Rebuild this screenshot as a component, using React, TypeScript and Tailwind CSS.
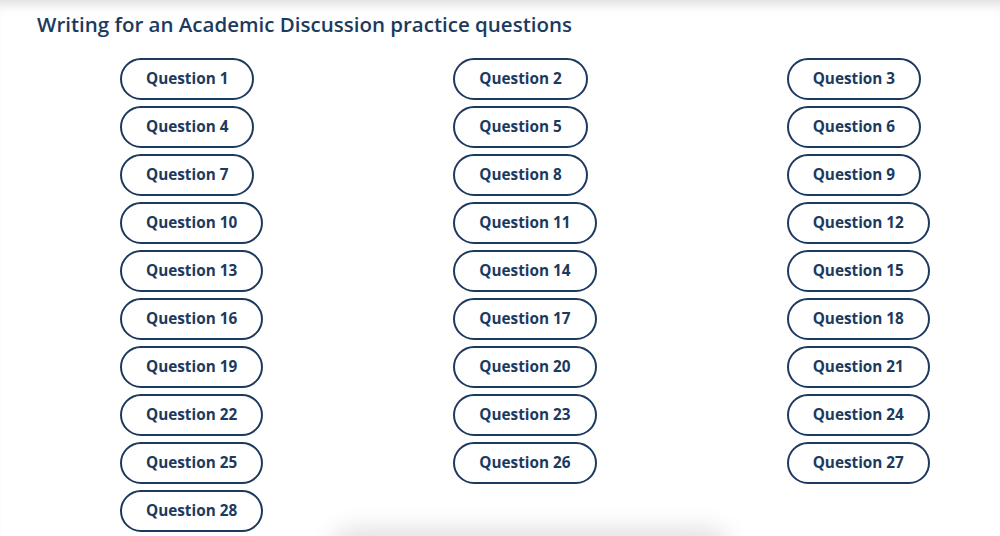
import React from "react"

const questions = Array.from({ length: 28 }, (_, i) => i + 1)

export default function App() {
    return (
        <div
            className="min-h-screen bg-white shadow-[inset_0_12px_12px_-8px_rgba(0,0,0,0.14)] text-[#1c3a5e]"
            style={{ fontFamily: "'Open Sans', sans-serif" }}
        >
            <h1 className="pl-[37px] pt-[10px] text-[20.5px] leading-[28px] font-semibold">
                Writing for an Academic Discussion practice questions
            </h1>
            <div className="mt-[20px] grid grid-cols-3 gap-y-[6px]">
                {questions.map((q) => (
                    <div key={q} className="pl-[120px]">
                        <button className="h-[42px] rounded-full border-2 border-[#1c3a5e] bg-white px-6 text-[15.3px] font-bold leading-none">
                            Question {q}
                        </button>
                    </div>
                ))}
            </div>
            {/* floating bar below the fold */}
            <div className="ml-[330px] mt-[4px] h-12 w-[400px] rounded-full bg-white shadow-[0_-8px_24px_rgba(0,0,0,0.12)]" />
        </div>
    )
}
